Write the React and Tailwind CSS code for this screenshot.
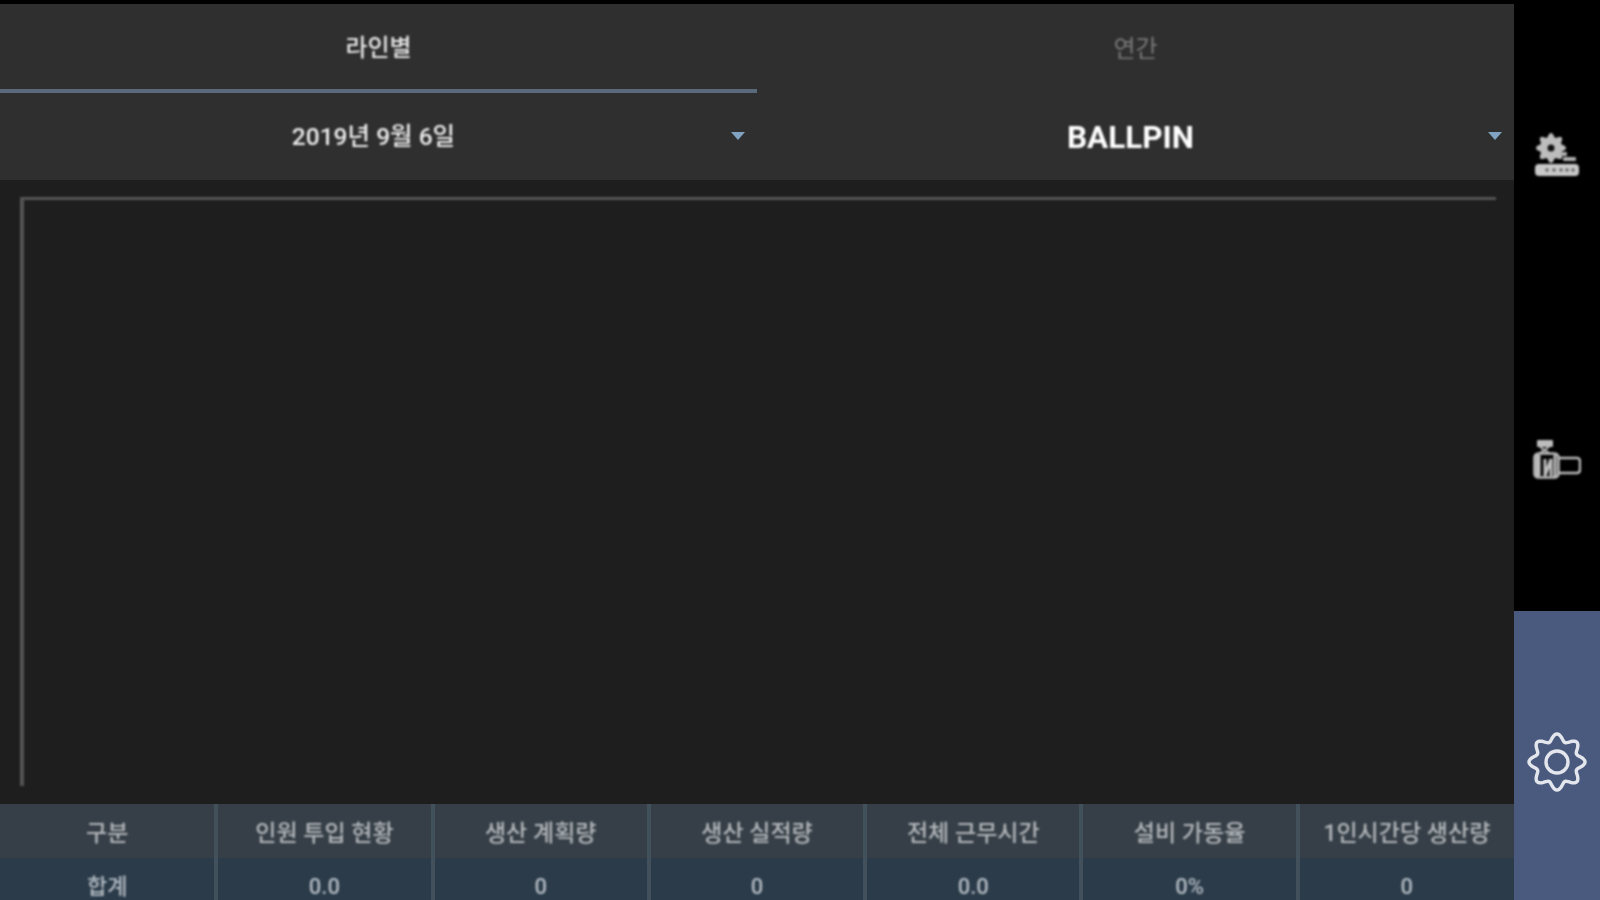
const headers = ["구분", "인원 투입 현황", "생산 계획량", "생산 실적량", "전체 근무시간", "설비 가동율", "1인시간당 생산량"];
const values = ["합계", "0.0", "0", "0", "0.0", "0%", "0"];

// wavy gear outline, teeth come from a cosine on the radius
function gearPath(cx, cy, r, depth) {
  let d = "";
  for (let i = 0; i < 160; i++) {
    const a = (i / 160) * Math.PI * 2;
    const rad = r - depth / 2 + (depth / 2) * Math.cos(8 * a);
    d += `${i === 0 ? "M" : "L"}${(cx + rad * Math.sin(a)).toFixed(2)} ${(cy - rad * Math.cos(a)).toFixed(2)}`;
  }
  return d + "Z";
}

function GearLineIcon() {
  return (
    <svg className="blur-[0.8px]" width="46" height="44" viewBox="0 0 46 44">
      <path d={gearPath(17, 15, 15, 4)} fill="#bdbdbd" />
      <circle cx="17" cy="15" r="3.5" fill="#111" />
      <g fill="#b0b0b0">
        <rect x="26" y="19" width="7" height="4" rx="1" />
        <rect x="29" y="24" width="13" height="4" rx="1" />
      </g>
      <rect x="1" y="31" width="44" height="12" rx="4" fill="#c8c8c8" />
      <g fill="#666">
        <circle cx="13" cy="37" r="1.8" />
        <circle cx="20" cy="37" r="1.8" />
        <circle cx="27" cy="37" r="1.8" />
        <circle cx="33" cy="37" r="1.8" />
        <circle cx="39" cy="37" r="1.8" />
      </g>
    </svg>
  );
}

function WorkerIcon() {
  return (
    <svg className="blur-[0.8px]" width="48" height="40" viewBox="0 0 48 40" fill="none" stroke="#bdbdbd" strokeWidth="2.5">
      <rect x="4" y="1" width="16" height="7" rx="1" fill="#bdbdbd" stroke="none" />
      <path d="M7 8l9 6M16 8l-9 6" strokeWidth="2" />
      <rect x="1.5" y="14.5" width="24" height="24" rx="4" />
      <path d="M5 16v21" strokeWidth="5" />
      <path d="M12 20v17l6-17v17" strokeWidth="3" />
      <path d="M22 16v22" strokeWidth="3" />
      <path d="M26 19h18a3 3 0 0 1 3 3v9a3 3 0 0 1-3 3h-18" />
    </svg>
  );
}

function SettingsGear() {
  return (
    <svg className="blur-[0.6px]" width="60" height="60" viewBox="0 0 60 60" fill="none" stroke="#e4e6ee" strokeWidth="3.4">
      <path d={gearPath(30, 30, 28, 7)} />
      <circle cx="30" cy="30" r="11" />
    </svg>
  );
}

function Caret() {
  return <div className="absolute right-[12px] top-[39px] w-0 h-0 border-x-[7px] border-x-transparent border-t-[8px] border-t-[#7fa3c0] blur-[0.5px]"></div>;
}

export default function App() {
  return (
    <div className="flex h-[900px] w-[1600px] overflow-hidden bg-black pt-[4px] font-['Roboto','Noto_Sans_CJK_KR',sans-serif]">
      <div className="flex flex-col w-[1514px] bg-[#1e1e1e]">
        <div className="bg-[#2f2f2f]">
          <div className="grid grid-cols-2 h-[89px]">
            <div className="flex items-center justify-center pt-[3px] border-b-4 border-[#5a6a7c] text-[24px] font-medium text-[#e8e8e8]">
              <span className="inline-block blur-[0.8px]">라인별</span>
            </div>
            <div className="flex items-center justify-center pt-[1px] text-[24px] text-[#7a7a7a]">
              <span className="inline-block blur-[0.8px]">연간</span>
            </div>
          </div>
          <div className="grid grid-cols-2 h-[87px]">
            <div className="relative flex items-center justify-center pr-[10px] pt-[2px] text-[24.5px] font-medium text-[#eeeeee]">
              <span className="inline-block blur-[0.8px]">2019년 9월 6일</span>
              <Caret />
            </div>
            <div className="relative flex items-center justify-center pr-[10px] pt-[2px] text-[31.5px] font-bold text-white">
              <span className="inline-block blur-[0.8px]">BALLPIN</span>
              <Caret />
            </div>
          </div>
        </div>
        <div className="flex-1 pt-[17px] pl-[20px] pr-[18px] pb-[18px]">
          <div className="h-full border-l-4 border-t-[3px] border-[#555555] blur-[0.8px]"></div>
        </div>
        <div className="grid grid-cols-7 h-[96px]">
          {headers.map((h, i) => (
            <div key={h} className="flex flex-col border-x-2 border-[#42505b] first:border-l-0 last:border-r-0">
              <div className="flex h-[54px] items-center justify-center pt-[6px] bg-[#363f47] text-[23px] font-medium text-[#b4b8bc]">
                <span className="inline-block blur-[0.8px]">{h}</span>
              </div>
              <div className="flex flex-1 items-center justify-center pt-[12px] bg-[#2b3b49] text-[22px] font-medium text-[#b4bcc4]">
                <span className="inline-block blur-[0.8px]">{values[i]}</span>
              </div>
            </div>
          ))}
        </div>
      </div>
      <div className="flex flex-1 flex-col -mt-[4px]">
        <div className="flex flex-1 items-center justify-center pt-[3px]">
          <GearLineIcon />
        </div>
        <div className="flex flex-1 items-center justify-center">
          <WorkerIcon />
        </div>
        <div className="flex h-[289px] items-center justify-center pt-[13px] bg-[#4a5a7e]">
          <SettingsGear />
        </div>
      </div>
    </div>
  );
}
